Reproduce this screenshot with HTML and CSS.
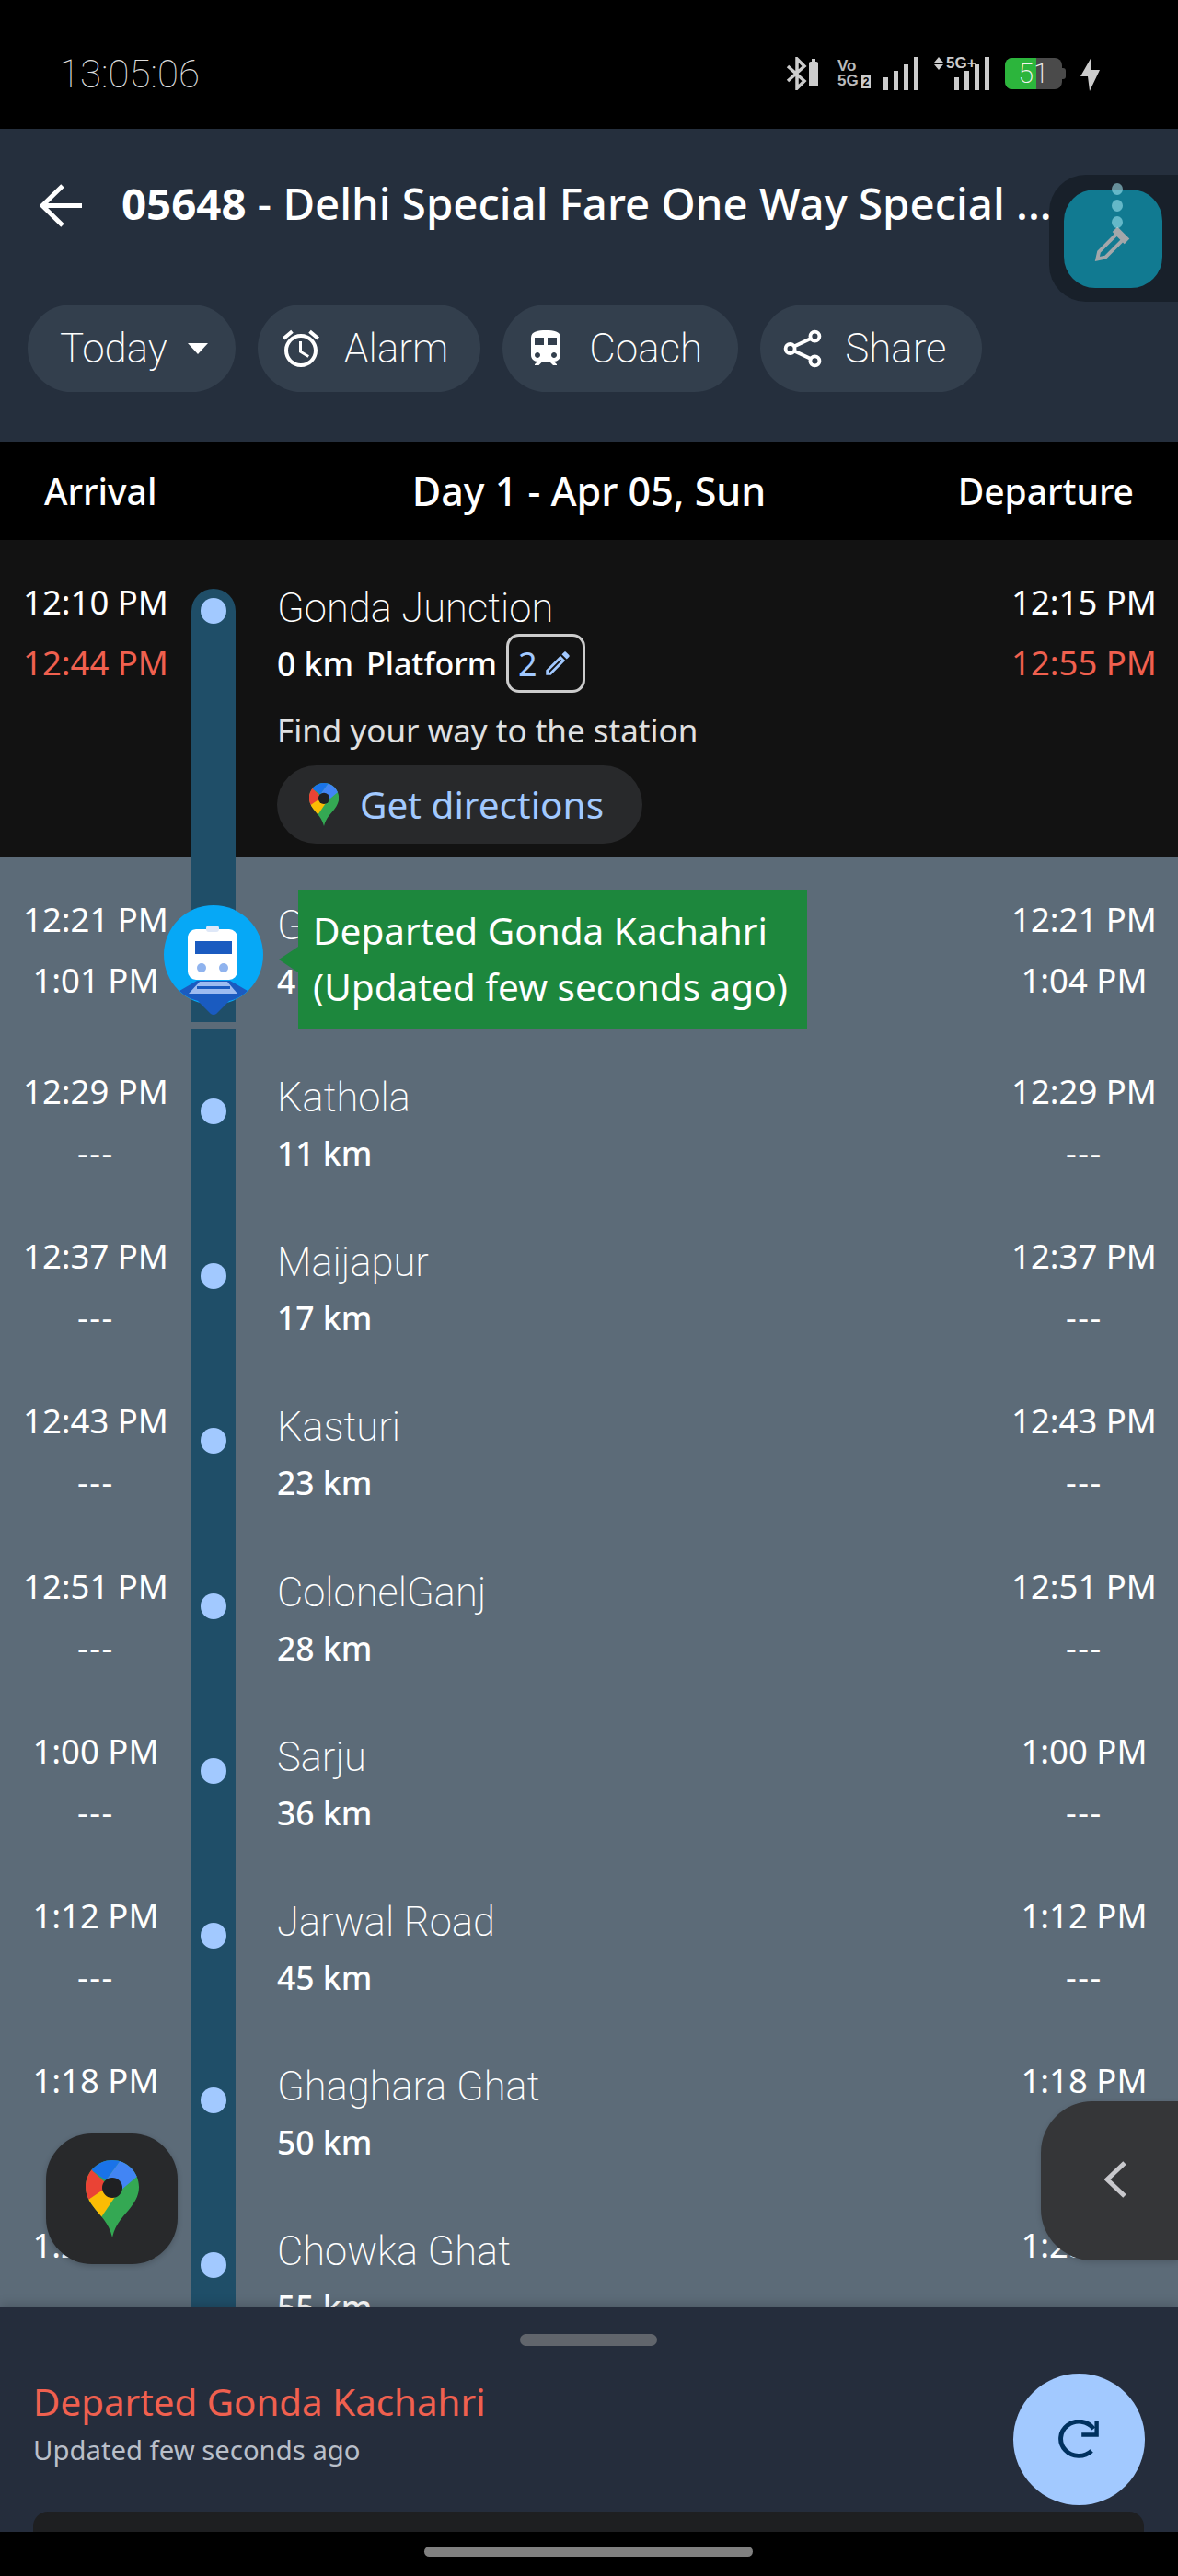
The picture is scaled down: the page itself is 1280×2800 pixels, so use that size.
FILE: index.html
```html
<!DOCTYPE html>
<html lang="en">
<head>
    <meta charset="UTF-8">
    <title>05648 - Delhi Special Fare One Way Special</title>
    <link rel="stylesheet" href="styles.css">
</head>
<body>
    <svg class="defs" width="0" height="0">
        <defs>
            <clipPath id="pinClip">
                <path d="M29 0C13 0 0 13 0 29c0 8 3 14 8 21 8 11 17 17 21 34 4-17 13-23 21-34 5-7 8-13 8-21C58 13 45 0 29 0z"/>
            </clipPath>
            <symbol id="mapsPin" viewBox="0 0 58 84">
                <g clip-path="url(#pinClip)">
                    <rect width="58" height="84" fill="#34a853"/>
                    <polygon points="3,43 22,24 40,28 17,62 0,62" fill="#fbbc04"/>
                    <polygon points="0,0 8,12 25,28 3,43 0,50" fill="#ea4335"/>
                    <polygon points="0,0 38,0 22,22 8,12" fill="#1a73e8"/>
                    <polygon points="38,0 58,0 58,16 38,33 22,22" fill="#4285f4"/>
                    <circle cx="29" cy="30" r="11" fill="#1f2022"/>
                </g>
            </symbol>
            <symbol id="pencil" viewBox="0 0 24 24">
                <path d="M14.06 9.02l.92.92L5.92 19H5v-.92l9.06-9.06M17.66 3c-.25 0-.51.1-.7.29l-1.83 1.83 3.75 3.75 1.83-1.83c.39-.39.39-1.02 0-1.41l-2.34-2.34c-.2-.2-.45-.29-.71-.29zm-3.6 3.19L3 17.25V21h3.75L17.81 9.94l-3.75-3.75z"/>
            </symbol>
        </defs>
    </svg>

    <div class="phone">
        <div class="status-bar">
            <span class="clock">13:05:06</span>
            <div class="status-icons">
                <svg class="ic-bt" width="37" height="36" viewBox="0 0 37 36">
                    <path d="M2 10l18 16-8 8V2l8 8L2 26" fill="none" stroke="#ccc" stroke-width="3.5"/>
                    <path d="M25 7q0-2 2-2h1v-3h4v3h1q2 0 2 2v24h-10z" fill="#ccc"/>
                </svg>
                <div class="volte"><span>Vo</span><span>5G<i>2</i></span></div>
                <svg class="ic-signal" width="38" height="36" viewBox="0 0 38 36">
                    <path d="M0 22h5v14H0zM11 15h5v21h-5zM22 8h5v28h-5zM33 0h5v36h-5z" fill="#ccc"/>
                </svg>
                <div class="signal-5g">
                    <svg width="10" height="14" viewBox="0 0 10 14"><path d="M5 0l5 6H0zM0 8h10l-5 6z" fill="#ccc"/></svg>
                    <span>5G+</span>
                    <svg width="38" height="36" viewBox="0 0 38 36">
                        <path d="M0 22h5v14H0zM11 15h5v21h-5zM22 8h5v28h-5zM33 0h5v36h-5z" fill="#ccc"/>
                    </svg>
                </div>
                <div class="battery"><span class="battery-fill"></span><span class="battery-num">51</span></div>
                <svg width="21" height="37" viewBox="0 0 21 37"><path d="M12 0L0 21h8l2 16L21 14h-9z" fill="#ccc"/></svg>
            </div>
        </div>

        <header class="top-bar">
            <div class="title-row">
                <svg class="back" width="46" height="47" viewBox="0 0 46 47">
                    <path d="M25 2L3 23.5 25 45M3 23.5h43" fill="none" stroke="#fff" stroke-width="5"/>
                </svg>
                <h1><b>05648</b> - Delhi Special Fare One Way Special ...</h1>
            </div>
            <div class="pills">
                <div class="pill pill-today">Today <span class="caret"></span></div>
                <div class="pill pill-alarm">
                    <svg width="48" height="48" viewBox="0 0 24 24" fill="#fff"><path d="M22 5.72l-4.6-3.86-1.29 1.53 4.6 3.86L22 5.72zM7.88 3.39L6.6 1.86 2 5.71l1.29 1.53 4.59-3.85zM12.5 8H11v6l4.75 2.85.75-1.23-4-2.37V8zM12 4c-4.97 0-9 4.03-9 9s4.02 9 9 9c4.97 0 9-4.03 9-9s-4.03-9-9-9zm0 16c-3.87 0-7-3.13-7-7s3.13-7 7-7 7 3.13 7 7-3.13 7-7 7z"/></svg>
                    Alarm
                </div>
                <div class="pill">
                    <svg width="48" height="48" viewBox="0 0 24 24" fill="#fff"><path d="M12 2c-4 0-8 .5-8 4v9.5C4 17.43 5.57 19 7.5 19L6 20.5v.5h2.23l2-2H14l2 2h2v-.5L16.5 19c1.93 0 3.5-1.57 3.5-3.5V6c0-3.5-3.58-4-8-4zM7.5 17c-.83 0-1.5-.67-1.5-1.5S6.67 14 7.5 14s1.5.67 1.5 1.5S8.33 17 7.5 17zm3.5-7H6V6h5v4zm2 0V6h5v4h-5zm3.5 7c-.83 0-1.5-.67-1.5-1.5s.67-1.5 1.5-1.5 1.5.67 1.5 1.5-.67 1.5-1.5 1.5z"/></svg>
                    Coach
                </div>
                <div class="pill">
                    <svg width="46" height="46" viewBox="0 0 24 24" fill="none" stroke="#fff" stroke-width="2"><circle cx="19" cy="5" r="2.6"/><circle cx="5" cy="12" r="2.6"/><circle cx="19" cy="19" r="2.6"/><path d="M7.3 10.7l9.4-4.4M7.3 13.3l9.4 4.4"/></svg>
                    Share
                </div>
            </div>
        </header>

        <div class="table-head">
            <span>Arrival</span>
            <span class="day">Day 1 - Apr 05, Sun</span>
            <span class="head-right">Departure</span>
        </div>

        <div class="stops">
            <div class="stop stop-first">
                <div class="times">
                    <div>12:10 PM</div>
                    <div class="late">12:44 PM</div>
                </div>
                <div class="track"><span class="dot"></span></div>
                <div class="info">
                    <div class="name">Gonda Junction</div>
                    <div class="meta">
                        <span>0 km</span><span class="platform-label">Platform</span>
                        <span class="platform">2 <svg width="34" height="34"><use href="#pencil" fill="#a2c9ff"/></svg></span>
                    </div>
                    <div class="find">Find your way to the station</div>
                    <div class="directions">
                        <svg width="34" height="47"><use href="#mapsPin"/></svg>
                        Get directions
                    </div>
                </div>
                <div class="times times-right">
                    <div>12:15 PM</div>
                    <div class="late">12:55 PM</div>
                </div>
            </div>

            <div class="stop stop-current">
                <div class="times">
                    <div>12:21 PM</div>
                    <div>1:01 PM</div>
                </div>
                <div class="track">
                    <svg class="train-marker" width="108" height="120" viewBox="0 0 108 120">
                        <circle cx="54" cy="54" r="54" fill="#06a8f6"/>
                        <path d="M36 82h36l19 11q-8 8-20 11l-14 14q-3 2-6 0l-14-14q-12-3-20-11z" fill="#1a5bc0"/>
                        <path d="M39 83h30l11 13H27z" fill="#9dbcf0"/>
                        <path d="M36 88h36v3H36z" fill="#1a5bc0"/>
                        <rect x="26" y="26" width="54" height="55" rx="9" fill="#fff"/>
                        <rect x="46" y="22" width="14" height="7" rx="3" fill="#dfe8f8"/>
                        <rect x="34" y="39" width="40" height="14" fill="#1a5bc0"/>
                        <circle cx="41" cy="68" r="5" fill="#8fb3ee"/>
                        <circle cx="65" cy="68" r="5" fill="#8fb3ee"/>
                    </svg>
                </div>
                <div class="info">
                    <div class="name">Gonda Kachahri</div>
                    <div class="meta"><span>4 km</span></div>
                </div>
                <div class="times times-right">
                    <div>12:21 PM</div>
                    <div>1:04 PM</div>
                </div>
                <div class="tooltip">Departed Gonda Kachahri<br>(Updated few seconds ago)</div>
            </div>

            <div class="stop">
                <div class="times"><div>12:29 PM</div><div class="none">---</div></div>
                <div class="track"><span class="dot"></span></div>
                <div class="info"><div class="name">Kathola</div><div class="meta"><span>11 km</span></div></div>
                <div class="times times-right"><div>12:29 PM</div><div class="none">---</div></div>
            </div>
            <div class="stop">
                <div class="times"><div>12:37 PM</div><div class="none">---</div></div>
                <div class="track"><span class="dot"></span></div>
                <div class="info"><div class="name">Maijapur</div><div class="meta"><span>17 km</span></div></div>
                <div class="times times-right"><div>12:37 PM</div><div class="none">---</div></div>
            </div>
            <div class="stop">
                <div class="times"><div>12:43 PM</div><div class="none">---</div></div>
                <div class="track"><span class="dot"></span></div>
                <div class="info"><div class="name">Kasturi</div><div class="meta"><span>23 km</span></div></div>
                <div class="times times-right"><div>12:43 PM</div><div class="none">---</div></div>
            </div>
            <div class="stop">
                <div class="times"><div>12:51 PM</div><div class="none">---</div></div>
                <div class="track"><span class="dot"></span></div>
                <div class="info"><div class="name">ColonelGanj</div><div class="meta"><span>28 km</span></div></div>
                <div class="times times-right"><div>12:51 PM</div><div class="none">---</div></div>
            </div>
            <div class="stop">
                <div class="times"><div>1:00 PM</div><div class="none">---</div></div>
                <div class="track"><span class="dot"></span></div>
                <div class="info"><div class="name">Sarju</div><div class="meta"><span>36 km</span></div></div>
                <div class="times times-right"><div>1:00 PM</div><div class="none">---</div></div>
            </div>
            <div class="stop">
                <div class="times"><div>1:12 PM</div><div class="none">---</div></div>
                <div class="track"><span class="dot"></span></div>
                <div class="info"><div class="name">Jarwal Road</div><div class="meta"><span>45 km</span></div></div>
                <div class="times times-right"><div>1:12 PM</div><div class="none">---</div></div>
            </div>
            <div class="stop">
                <div class="times"><div>1:18 PM</div><div class="none">---</div></div>
                <div class="track"><span class="dot"></span></div>
                <div class="info"><div class="name">Ghaghara Ghat</div><div class="meta"><span>50 km</span></div></div>
                <div class="times times-right"><div>1:18 PM</div><div class="none">---</div></div>
            </div>
            <div class="stop">
                <div class="times"><div>1:25 PM</div><div class="none">---</div></div>
                <div class="track"><span class="dot"></span></div>
                <div class="info"><div class="name">Chowka Ghat</div><div class="meta"><span>55 km</span></div></div>
                <div class="times times-right"><div>1:25 PM</div><div class="none">---</div></div>
            </div>
        </div>

        <div class="sheet">
            <span class="sheet-handle"></span>
            <div class="sheet-title">Departed Gonda Kachahri</div>
            <div class="sheet-sub">Updated few seconds ago</div>
            <div class="sheet-card"></div>
        </div>
        <div class="nav-bar"><span></span></div>

        <!-- floating stuff on top of the page -->
        <div class="float-tool">
            <div class="float-tool-btn">
                <svg width="40" height="40" viewBox="0 0 46 46">
                    <path d="M31 9L7 33l-2 9 10-2 24-24z" fill="none" stroke="#a3a7aa" stroke-width="4.5"/>
                    <path d="M27 5l15 15" stroke="#a3a7aa" stroke-width="9"/>
                </svg>
            </div>
            <span class="tool-dot dot-a"></span>
            <span class="tool-dot dot-b"></span>
            <span class="tool-dot dot-c"></span>
        </div>
        <div class="maps-fab"><svg width="58" height="84"><use href="#mapsPin"/></svg></div>
        <div class="side-handle">
            <svg width="24" height="40" viewBox="0 0 24 40"><path d="M22 2L3 20l19 18" fill="none" stroke="#c8c8cc" stroke-width="5"/></svg>
        </div>
        <div class="refresh-fab">
            <svg width="46" height="44" viewBox="0 0 42 40">
                <path d="M33 31A18 17 0 1 1 35 9" fill="none" stroke="#00315f" stroke-width="4.5"/>
                <path d="M40 1v16H23v-4h13V1z" fill="#00315f"/>
            </svg>
        </div>
    </div>
</body>
</html>
```

FILE: styles.css
```css
body {
    margin: 0;
    background: #000;
    font-family: "Noto Sans", Arial, sans-serif;
    color: #fff;
}

.defs {
    position: absolute;
}

.phone {
    position: relative;
    width: 1280px;
    height: 2800px;
    overflow: hidden;
    display: flex;
    flex-direction: column;
}

/* status bar */
.status-bar {
    height: 140px;
    flex: none;
    background: #000;
    display: flex;
    align-items: center;
    padding: 20px 85px 0 64px;
    box-sizing: border-box;
    justify-content: space-between;
}

.clock {
    font-family: Roboto, sans-serif;
    font-weight: 100;
    font-size: 42px;
    color: #ddd;
}

.status-icons {
    display: flex;
    align-items: center;
    gap: 17px;
}

.volte {
    font-family: "Liberation Sans", sans-serif;
    font-size: 17px;
    line-height: 16px;
    font-weight: 700;
    color: #bbb;
    display: flex;
    flex-direction: column;
    width: 35px;
    transform: translateX(2px);
}

.volte i {
    font-style: normal;
    font-size: 12px;
    margin-left: 3px;
    background: #ccc;
    color: #000;
    padding: 0 2px;
}

.signal-5g {
    position: relative;
    display: flex;
    width: 60px;
    justify-content: flex-end;
    height: 36px;
}

.signal-5g > svg:first-child {
    position: absolute;
    left: 0;
    top: 0;
}

.signal-5g span {
    position: absolute;
    left: 13px;
    top: -3px;
    font-family: "Liberation Sans", sans-serif;
    font-weight: 700;
    font-size: 17px;
    color: #ccc;
}

.battery {
    position: relative;
    width: 62px;
    height: 34px;
    margin: 0 3px 0 0;
    background: #4a4a4a;
    border-radius: 8px;
    text-align: center;
}

.battery::after {
    content: "";
    position: absolute;
    right: -4px;
    top: 11px;
    width: 4px;
    height: 12px;
    border-radius: 0 3px 3px 0;
    background: #4a4a4a;
}

.battery-fill {
    position: absolute;
    left: 0;
    top: 0;
    bottom: 0;
    width: 34px;
    border-radius: 8px 0 0 8px;
    background: #2cb53c;
}

.battery-num {
    position: relative;
    font-family: Roboto, sans-serif;
    font-weight: 200;
    font-size: 30px;
    line-height: 34px;
    color: #f2f2f2;
}

/* header */
.top-bar {
    height: 340px;
    flex: none;
    background: #252f3d;
    box-sizing: border-box;
    padding: 60px 0 0 30px;
}

.title-row {
    display: flex;
    align-items: center;
    height: 47px;
    padding-left: 13px;
}

.back {
    margin-right: 43px;
    flex: none;
}

h1 {
    margin: 0;
    font-size: 47.4px;
    font-weight: 500;
    white-space: nowrap;
    position: relative;
    top: -3px;
    z-index: 1;
}

h1 b {
    font-weight: 700;
}

.pills {
    display: flex;
    gap: 24px;
    margin-top: 84px;
}

.pill {
    height: 95px;
    border-radius: 48px;
    background: #333f4d;
    display: flex;
    align-items: center;
    gap: 23px;
    padding: 0 39px 0 23px;
    font-family: Roboto, sans-serif;
    font-weight: 200;
    font-size: 44px;
}

.pill-today {
    padding: 0 30px 0 35px;
    gap: 22px;
}

.pill-alarm {
    padding-right: 35px;
}

.caret {
    width: 0;
    height: 0;
    border-left: 11px solid transparent;
    border-right: 11px solid transparent;
    border-top: 12px solid #fff;
}

/* table */
.table-head {
    height: 107px;
    flex: none;
    box-sizing: border-box;
    background: #000;
    display: grid;
    grid-template-columns: 1fr auto 1fr;
    align-items: center;
    padding: 0 48px;
    font-size: 39px;
    font-weight: 500;
}

.day {
    font-size: 43px;
}

.head-right {
    text-align: right;
}

.stops {
    height: 1921px;
    flex: none;
    overflow: hidden;
    background: #5c6b78;
}

.stop {
    position: relative;
    height: 179.2px;
    display: grid;
    grid-template-columns: 208px 48px 1fr 208px;
}

.stop-first {
    height: 345px;
    background: #121212;
}

.stop-current {
    height: 179px;
    margin-bottom: 8px;
}

.times {
    padding-top: 34px;
    text-align: center;
    font-size: 36.5px;
    line-height: 67px;
}

.times-right {
    padding-left: 4px;
}

.times div {
    height: 66px;
}

.times .none {
    letter-spacing: 1.5px;
}

.late {
    color: #f0604f;
}

.track {
    position: relative;
    background: #1f4e68;
}

.stop-first .track {
    margin-top: 53px;
    border-radius: 24px 24px 0 0;
}

.dot {
    position: absolute;
    left: 10px;
    top: 75px;
    width: 28px;
    height: 28px;
    border-radius: 50%;
    background: #a2c9ff;
}

.stop-first .dot {
    top: 10px;
}

.train-marker {
    position: absolute;
    left: -30px;
    top: 52px;
    z-index: 2;
}

.info {
    padding: 45px 0 0 45px;
}

.name {
    font-family: Roboto, sans-serif;
    font-weight: 200;
    font-size: 43.5px;
    line-height: 60px;
}

.meta {
    display: flex;
    align-items: center;
    font-size: 35.5px;
    font-weight: 500;
    height: 58px;
}

.platform-label {
    margin-left: 14px;
    font-size: 34px;
}

.platform {
    display: flex;
    align-items: center;
    justify-content: center;
    gap: 5px;
    box-sizing: border-box;
    width: 86px;
    height: 64px;
    margin-left: 10px;
    border: 3px solid #ccc;
    border-radius: 14px;
    color: #a2c9ff;
    font-weight: 400;
    font-size: 36px;
}

.find {
    margin-top: 21px;
    font-size: 35px;
    color: #e0e0e0;
    line-height: 46px;
}

.directions {
    display: inline-flex;
    align-items: center;
    gap: 22px;
    height: 85px;
    margin-top: 15px;
    padding: 0 42px 0 34px;
    border-radius: 43px;
    background: #28292b;
    color: #a2c9ff;
    font-size: 40.5px;
}

.tooltip {
    position: absolute;
    left: 324px;
    top: 35px;
    z-index: 3;
    width: 553px;
    height: 152px;
    box-sizing: border-box;
    padding: 14px 16px;
    background: #1d873d;
    font-size: 40.5px;
    line-height: 61px;
    white-space: nowrap;
}

.tooltip::before {
    content: "";
    position: absolute;
    left: -21px;
    top: 62px;
    border-top: 14px solid transparent;
    border-bottom: 14px solid transparent;
    border-right: 21px solid #1d873d;
}

/* bottom sheet */
.sheet {
    position: relative;
    height: 244px;
    flex: none;
    background: #252d3c;
    box-sizing: border-box;
    padding: 81px 36px 0;
    box-shadow: 0 -4px 10px rgba(0, 0, 0, 0.15);
}

.sheet-handle {
    position: absolute;
    left: 565px;
    top: 29px;
    width: 149px;
    height: 13px;
    border-radius: 7px;
    background: #61656c;
}

.sheet-title {
    font-size: 40.3px;
    line-height: 44px;
    color: #f0604f;
}

.sheet-sub {
    margin-top: 10px;
    font-size: 29.3px;
    line-height: 40px;
    color: #b9bfc9;
}

.sheet-card {
    position: absolute;
    left: 36px;
    right: 37px;
    top: 222px;
    height: 40px;
    border-radius: 16px 16px 0 0;
    background: #1e1f21;
}

.nav-bar {
    height: 48px;
    flex: none;
    position: relative;
    background: #000;
}

.nav-bar span {
    position: absolute;
    left: 461px;
    top: 16px;
    width: 357px;
    height: 11px;
    border-radius: 6px;
    background: #808080;
}

/* floating buttons */
.float-tool {
    position: absolute;
    left: 1140px;
    top: 190px;
    width: 140px;
    height: 138px;
    background: #18202a;
    border-radius: 40px 0 0 40px;
}

.float-tool-btn {
    position: absolute;
    left: 16px;
    top: 16px;
    width: 107px;
    height: 107px;
    border-radius: 34px;
    background: #117a91;
    display: flex;
    align-items: center;
    justify-content: center;
}

.float-tool-btn svg {
    margin: 10px 4px 0 0;
}

.tool-dot {
    position: absolute;
    left: 68px;
    width: 12px;
    height: 13px;
    border-radius: 50%;
    background: rgba(170, 235, 245, 0.55);
}

.dot-a {
    top: 9px;
}

.dot-b {
    top: 27px;
}

.dot-c {
    top: 45px;
}

.maps-fab {
    position: absolute;
    left: 50px;
    top: 2319px;
    width: 143px;
    height: 142px;
    border-radius: 50px;
    background: #28292b;
    box-shadow: 0 2px 6px rgba(0, 0, 0, 0.2);
    display: flex;
    align-items: center;
    justify-content: center;
}

.side-handle {
    position: absolute;
    left: 1131px;
    top: 2284px;
    width: 149px;
    height: 173px;
    border-radius: 56px 0 0 56px;
    background: #353638;
    box-shadow: 0 2px 6px rgba(0, 0, 0, 0.15);
    display: flex;
    align-items: center;
    padding: 0 0 4px 69px;
    box-sizing: border-box;
}

.refresh-fab {
    position: absolute;
    left: 1101px;
    top: 2580px;
    width: 143px;
    height: 143px;
    border-radius: 50%;
    background: #a2c9ff;
    display: flex;
    align-items: center;
    justify-content: center;
}
```
